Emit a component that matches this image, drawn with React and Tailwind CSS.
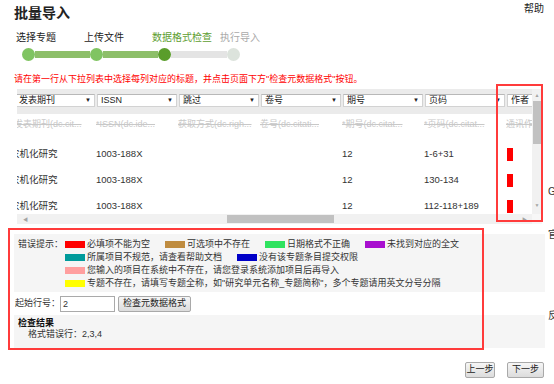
import React from 'react';

const columns = [
  { select: '发表期刊', hint: '发表期刊(dc.cit...' },
  { select: 'ISSN', hint: '*ISSN(dc.ide...' },
  { select: '跳过', hint: '获取方式(dc.righ...' },
  { select: '卷号', hint: '卷号(dc.citati...' },
  { select: '期号', hint: '*期号(dc.citat...' },
  { select: '页码', hint: '*页码(dc.citat...' },
  { select: '作者', hint: '通讯作者(dc.con...' },
];

const rows = [
  ['农机化研究', '1003-188X', '', '', '12', '1-6+31'],
  ['农机化研究', '1003-188X', '', '', '12', '130-134'],
  ['农机化研究', '1003-188X', '', '', '12', '112-118+189'],
];

const steps = [
  { label: '选择专题', text: 'text-[#222]' },
  { label: '上传文件', text: 'text-[#222]' },
  { label: '数据格式检查', text: 'text-[#5e9e31]' },
  { label: '执行导入', text: 'text-[#aaaaaa]' },
];

function Swatch({ color, label }) {
  return (
    <span className="inline-flex items-center mr-[15px]">
      <span className={`w-[20px] h-[7px] mr-[2px] ${color}`}></span>
      <span>{label}</span>
    </span>
  );
}

function App() {
  return (
    <div className="w-[554px] h-[384px] overflow-hidden flex bg-white text-[#222] font-['Liberation_Sans','Noto_Sans_CJK_SC',sans-serif]">
      <div className="relative w-[548px] shrink-0">
        {/* header */}
        <div className="flex justify-between items-start">
          <h1 className="ml-[14px] mt-[5px] text-[14px] leading-[16px] font-bold">批量导入</h1>
          <span className="mr-[4px] mt-[3px] text-[10px] leading-[12px]">帮助</span>
        </div>

        {/* steps */}
        <div className="ml-[16px] mt-[11px]">
          <div className="flex text-[10px] leading-[12px]">
            {steps.map((s) => (
              <div key={s.label} className={`w-[68px] ${s.text}`}>{s.label}</div>
            ))}
          </div>
          <div className="flex items-center mt-[4px] ml-[6px]">
            <span className="w-[13px] h-[13px] rounded-full bg-[#80c462]"></span>
            <span className="w-[55px] h-[7px] bg-[#8dbf69]"></span>
            <span className="w-[13px] h-[13px] rounded-full bg-[#80c462]"></span>
            <span className="w-[55px] h-[7px] bg-[#8dbf69]"></span>
            <span className="w-[13px] h-[13px] rounded-full bg-[#5a9d2b]"></span>
            <span className="w-[56px] h-[7px] bg-[#e4e4e4]"></span>
            <span className="w-[13px] h-[13px] rounded-full bg-[#dce3dc]"></span>
          </div>
        </div>

        <p className="ml-[14px] mt-[13px] text-[9px] leading-[11px] text-[#ff0000]">
          请在第一行从下拉列表中选择每列对应的标题，并点击页面下方"检查元数据格式"按钮。
        </p>

        {/* table */}
        <div className="ml-[17px] mt-[4px] w-[525px]">
          <div className="flex">
            <div className="w-[515px] h-[125px] overflow-hidden">
              <div className="-ml-[3px]">
                <div className="flex bg-[#ebebeb] h-[25px] pt-[5px]">
                  {columns.map((c) => (
                    <div key={c.select} className="w-[82px] shrink-0">
                      <div className="ml-[1px] w-[80px] h-[13px] bg-white border border-[#d2d2d2] border-t-[#b8b8b8] flex items-center justify-between px-[3px] text-[9px]">
                        <span>{c.select}</span>
                        <span className="text-[6px]">▼</span>
                      </div>
                    </div>
                  ))}
                </div>
                <div className="flex h-[22px] items-center text-[9px] text-[#c8c8c8] line-through">
                  {columns.map((c) => (
                    <div key={c.hint} className="w-[82px] shrink-0 whitespace-nowrap overflow-hidden">{c.hint}</div>
                  ))}
                </div>
                <div className="mt-[5px]">
                  {rows.map((r, i) => (
                    <div key={i} className="flex h-[26px] items-center text-[9.5px] text-[#333]">
                      {r.map((cell, j) => (
                        <div key={j} className={`w-[82px] shrink-0 whitespace-nowrap ${j === 0 ? '-indent-[4px]' : ''}`}>{cell}</div>
                      ))}
                      <div className="w-[82px] shrink-0">
                        <span className="block w-[6px] h-[13px] bg-[#ff0000] ml-[1px]"></span>
                      </div>
                    </div>
                  ))}
                </div>
              </div>
            </div>
            {/* vertical scrollbar */}
            <div className="w-[10px] h-[125px] bg-[#f1f1f1] flex flex-col items-center">
              <span className="mt-[4px] text-[5px] leading-[5px] text-[#a3a3a3]">▲</span>
              <span className="mt-[3px] w-[8px] h-[43px] bg-[#c1c1c1]"></span>
              <span className="mt-auto mb-[6px] text-[5px] leading-[5px] text-[#a3a3a3]">▼</span>
            </div>
          </div>
          {/* horizontal scrollbar */}
          <div className="flex h-[10px]">
            <div className="w-[515px] bg-[#f1f1f1] flex items-center">
              <span className="ml-[6px] text-[5px] leading-[5px] text-[#a3a3a3]">◀</span>
              <span className="ml-[199px] w-[107px] h-[8px] bg-[#c1c1c1]"></span>
              <span className="ml-auto mr-[5px] text-[5px] leading-[5px] text-[#a3a3a3]">▶</span>
            </div>
            <div className="w-[10px] bg-[#f7f7f7]"></div>
          </div>
        </div>

        {/* legend */}
        <div className="ml-[14px] mt-[10px] w-[531px] h-[58px] bg-[#f5f5f5] flex pt-[4px] pl-[4px] text-[9px] leading-[13px] text-[#333]">
          <div className="w-[47px] shrink-0">错误提示：</div>
          <div>
            <div className="flex">
              <Swatch color="bg-[#ff0000]" label="必填项不能为空" />
              <Swatch color="bg-[#bf8c40]" label="可选项中不存在" />
              <Swatch color="bg-[#2fe35f]" label="日期格式不正确" />
              <Swatch color="bg-[#a80fcf]" label="未找到对应的全文" />
            </div>
            <div className="flex">
              <Swatch color="bg-[#009b9b]" label="所属项目不规范，请查看帮助文档" />
              <Swatch color="bg-[#0000c8]" label="没有该专题条目提交权限" />
            </div>
            <div className="flex">
              <Swatch color="bg-[#ff9f9f]" label="您输入的项目在系统中不存在，请您登录系统添加项目后再导入" />
            </div>
            <div className="flex">
              <Swatch color="bg-[#ffff00]" label={'专题不存在，请填写专题全称，如"研究单元名称_专题简称"，多个专题请用英文分号分隔'} />
            </div>
          </div>
        </div>

        {/* start row */}
        <div className="ml-[15px] mt-[3px] flex items-center h-[17px] text-[9px] text-[#333]">
          <span className="w-[45px]">起始行号：</span>
          <input
            defaultValue="2"
            className="w-[55px] h-[16px] border border-[#aaa] bg-white px-[2px] text-[9px] outline-none"
          />
          <button className="ml-[3px] w-[73px] h-[16px] border border-[#a9a9a9] rounded-[2px] bg-gradient-to-b from-[#f6f6f6] to-[#dcdcdc] text-[9px] text-[#222]">
            检查元数据格式
          </button>
        </div>

        {/* result */}
        <div className="ml-[14px] mt-[3px] w-[531px] h-[33px] bg-[#f5f5f5] pl-[4px] pt-[3px] text-[9px] leading-[11px]">
          <div className="font-bold text-[#111]">检查结果</div>
          <div className="ml-[10px] text-[#333]">格式错误行：2,3,4</div>
        </div>

        {/* buttons */}
        <div className="flex justify-end gap-[12px] mr-[4px] mt-[14px]">
          <button className="w-[30px] h-[16px] border border-[#a9a9a9] rounded-[2px] bg-gradient-to-b from-[#f6f6f6] to-[#dcdcdc] text-[9px]">上一步</button>
          <button className="w-[37px] h-[16px] border border-[#a9a9a9] rounded-[2px] bg-gradient-to-b from-[#f6f6f6] to-[#dcdcdc] text-[9px]">下一步</button>
        </div>

        {/* annotation frames */}
        <div className="absolute left-[496px] top-[84px] w-[47px] h-[138px] border-2 border-[#ff3b3b]"></div>
        <div className="absolute left-[8px] top-[228px] w-[476px] h-[122px] border-2 border-[#ff3b3b]"></div>
      </div>

      {/* side column, cut by the window */}
      <div className="w-[60px] shrink-0 text-[10px] leading-[12px] text-[#333]">
        <div className="mt-[186px]">G</div>
        <div className="mt-[31px]">官</div>
        <div className="mt-[69px]">反</div>
      </div>
    </div>
  );
}

export default App;
